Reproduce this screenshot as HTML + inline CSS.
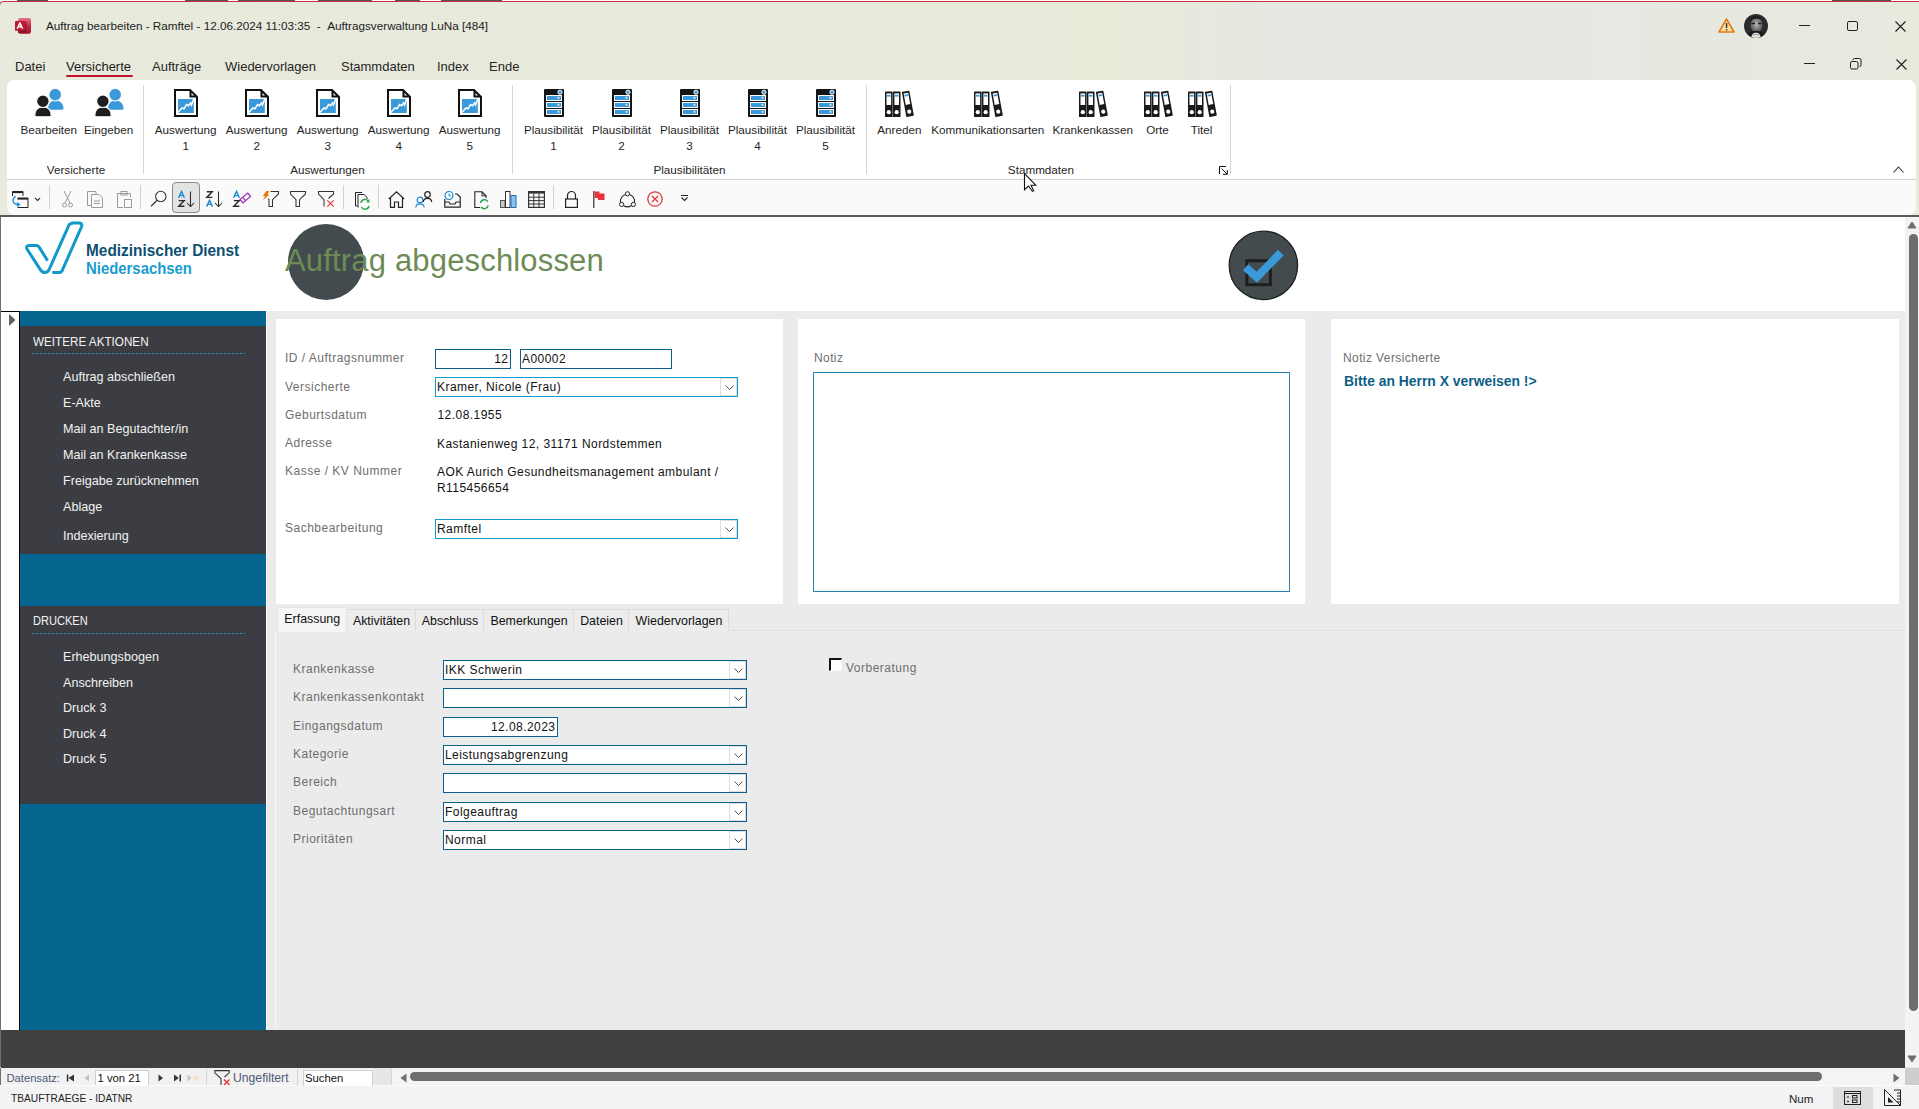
<!DOCTYPE html>
<html><head><meta charset="utf-8">
<style>
*{margin:0;padding:0;box-sizing:border-box}
html,body{width:1919px;height:1109px;overflow:hidden}
body{position:relative;background:#fbfbfb;font-family:"Liberation Sans",sans-serif;color:#000}
.a{position:absolute}
.t{position:absolute;white-space:nowrap;line-height:1}
svg{position:absolute;overflow:visible}
.mn{font-size:13px;color:#262626}
.rl{font-size:12px;color:#1f1f1f;text-align:center;line-height:16px}
.gl{font-size:12px;color:#262626;text-align:center}
.sep{position:absolute;width:1px;background:#d6d6d6}
.qs{position:absolute;width:1px;background:#d2d2d2;top:185px;height:24px}
.lbl{font-size:12px;color:#6e6e6e;letter-spacing:0.55px}
.val{font-size:12px;color:#111;letter-spacing:0.45px}
.box{position:absolute;border:1px solid #0c5f89;background:#fff}
.cmb{position:absolute;border:1px solid #0c5f89;background:#fff}
.cmb.f{border-color:#0f9ad0}
.dd{position:absolute;right:1px;top:1px;width:17px;bottom:1px;border:1px solid #e2e2e2;background:#fff}
.dd:after{content:"";position:absolute;left:4px;top:3px;width:5px;height:5px;border-right:1px solid #555;border-bottom:1px solid #555;transform:rotate(45deg)}
.sb{font-size:12.6px;color:#f2f2f2}
.sh{font-size:11.7px;color:#f4f4f4}
.dot{position:absolute;height:0;border-top:1px dashed #2f8fc0}
.tab{position:absolute;top:609px;height:22px;border:1px solid #dcdcdc;border-bottom:none;background:#ececec;font-size:12.4px;color:#111}
</style></head><body>

<!-- background window strip -->
<div class="a" style="left:0;top:0;width:1919px;height:8px;background:#fbfbfb"></div>
<div class="a" style="left:-1px;top:1px;width:1921px;height:1108px;background:linear-gradient(to right,#e7eadc 0%,#e8eadb 40%,#e9eada 58%,#e6e8e1 66%,#e6e8e2 82%,#e7eadd 100%);border-top:1px solid #c8303e;border-left:1px solid #c8303e;border-top-left-radius:5px"></div>

<div class="a" style="left:17px;top:0;width:31px;height:1px;background:#555"></div><div class="a" style="left:185px;top:0;width:43px;height:1px;background:#555"></div><div class="a" style="left:238px;top:0;width:57px;height:1px;background:#555"></div><div class="a" style="left:318px;top:0;width:54px;height:1px;background:#555"></div><div class="a" style="left:395px;top:0;width:25px;height:1px;background:#555"></div><div class="a" style="left:441px;top:0;width:61px;height:1px;background:#555"></div><div class="a" style="left:1832px;top:0;width:59px;height:1px;background:#555"></div>
<!-- title bar -->
<svg style="left:14px;top:17px" width="18" height="18" viewBox="0 0 18 18"><defs><linearGradient id="acg" x1="0" y1="0" x2="0" y2="1"><stop offset="0" stop-color="#e3788a"/><stop offset="0.5" stop-color="#c7283e"/><stop offset="1" stop-color="#a3132a"/></linearGradient></defs>
<rect x="4" y="1" width="13" height="15.8" rx="2.2" fill="url(#acg)"/>
<rect x="4" y="5" width="8.5" height="10.6" fill="#6e0b18" opacity="0.55"/>
<rect x="1" y="4" width="10.3" height="9.8" rx="0.8" fill="#bb1a30"/>
<path d="M3.2,11.8 L5.9,5.9 L8.6,11.8 M4.3,9.8 L7.5,9.8" fill="none" stroke="#fff" stroke-width="1.5" stroke-linejoin="round"/>
</svg>
<div class="t" style="left:46px;top:20px;font-size:11.72px;color:#1d1d1d">Auftrag bearbeiten - Ramftel - 12.06.2024 11:03:35 &nbsp;- &nbsp;Auftragsverwaltung LuNa [484]</div>

<svg style="left:1718px;top:18px" width="17" height="15" viewBox="0 0 17 15"><path d="M8.5 1 L16 14 L1 14 Z" fill="#fbe3a8" stroke="#e8780f" stroke-width="1.6" stroke-linejoin="round"/><rect x="7.8" y="5" width="1.5" height="5" fill="#333"/><rect x="7.8" y="11" width="1.5" height="1.5" fill="#333"/></svg>
<svg style="left:1744px;top:14px" width="24" height="24" viewBox="0 0 24 24"><defs><clipPath id="av"><circle cx="12" cy="12" r="12"/></clipPath><radialGradient id="fg" cx="0.5" cy="0.45" r="0.5"><stop offset="0" stop-color="#b8b8b8"/><stop offset="1" stop-color="#5a5a5a"/></radialGradient></defs>
<g clip-path="url(#av)"><rect width="24" height="24" fill="#2b2b2b"/>
<ellipse cx="12.5" cy="11" rx="6" ry="7.5" fill="url(#fg)"/>
<path d="M6,7 Q7,1.5 12.5,2 Q18,2 19,7 Q17,4.5 12.5,4.8 Q8,4.5 6,7Z" fill="#1e1e1e"/>
<path d="M7.5,9.5 L11,9.5 M14,9.5 L17.5,9.5" stroke="#222" stroke-width="1.3"/>
<path d="M3,24 Q4,17 8,17.5 Q12,16 16,17.5 Q20,17 21,24Z" fill="#1a1a1a"/>
<path d="M7,24 Q8,18.5 12,18.8 Q16,18.5 17,24Z" fill="#e0e0e0"/>
<path d="M9,21 Q12,19.5 15,21" stroke="#888" stroke-width="0.8" fill="none"/>
</g></svg>

<div class="a" style="left:1799px;top:25px;width:11px;height:1px;background:#222"></div>
<div class="a" style="left:1847px;top:21px;width:11px;height:10px;border:1px solid #222;border-radius:2px"></div>
<svg style="left:1895px;top:21px" width="11" height="11" viewBox="0 0 11 11"><path d="M0.5 0.5 L10.5 10.5 M10.5 0.5 L0.5 10.5" stroke="#222" stroke-width="1.15"/></svg>

<!-- menu -->
<div class="t mn" style="left:15px;top:59.5px">Datei</div>
<div class="t mn" style="left:66px;top:59.5px;color:#1a1a1a">Versicherte</div>
<div class="a" style="left:66px;top:75px;width:67px;height:2px;background:#c0152c;border-radius:1px"></div>
<div class="t mn" style="left:152px;top:59.5px">Aufträge</div>
<div class="t mn" style="left:225px;top:59.5px">Wiedervorlagen</div>
<div class="t mn" style="left:341px;top:59.5px">Stammdaten</div>
<div class="t mn" style="left:437px;top:59.5px">Index</div>
<div class="t mn" style="left:489px;top:59.5px">Ende</div>

<div class="a" style="left:1804px;top:63px;width:11px;height:1px;background:#222"></div>
<svg style="left:1850px;top:58px" width="12" height="12" viewBox="0 0 12 12"><rect x="0.5" y="3.5" width="7.5" height="7.5" rx="1.5" fill="none" stroke="#222"/><path d="M3 2 Q3 0.5 4.5 0.5 L9.5 0.5 Q11 0.5 11 2 L11 7 Q11 8.5 9.5 8.5" fill="none" stroke="#222"/></svg>
<svg style="left:1896px;top:59px" width="11" height="11" viewBox="0 0 11 11"><path d="M0.5 0.5 L10.5 10.5 M10.5 0.5 L0.5 10.5" stroke="#222" stroke-width="1.15"/></svg>

<!-- ribbon -->
<div class="a" style="left:7px;top:80px;width:1909px;height:135px;background:#fafafa;border-radius:8px"></div>
<div class="a" style="left:7px;top:80px;width:1909px;height:99px;background:#fff;border-radius:8px 8px 0 0"></div>
<div class="a" style="left:7px;top:179px;width:1909px;height:1px;background:#d0d0d0"></div>


<svg style="left:35px;top:88px" width="29" height="29" viewBox="0 0 29 29">
<path d="M13,21.5 C13,15.5 16,12.5 20.5,12.5 C25,12.5 28.5,15.5 28.5,20.5 Q28.5,21.8 27,21.8 L14,21.8 Q13,21.8 13,21.5Z" fill="#3a9ad9"/>
<circle cx="20.2" cy="6.6" r="6.4" fill="#3a9ad9" stroke="#fff" stroke-width="1.2"/>
<path d="M-0.2,27.5 C-0.2,21.5 3,19 8,19 C13,19 16.2,21.5 16.2,27.5 Q16.2,28.8 15,28.8 L1,28.8 Q-0.2,28.8 -0.2,27.5Z" fill="#1e1e1e" stroke="#fff" stroke-width="1.2"/>
<circle cx="7.9" cy="13.2" r="6.3" fill="#1e1e1e" stroke="#fff" stroke-width="1.2"/>
</svg>
<div class="t" style="left:-101.2px;width:300px;text-align:center;top:124.1px;font-size:11.7px;color:#1f1f1f;">Bearbeiten</div>
<svg style="left:95px;top:88px" width="29" height="29" viewBox="0 0 29 29">
<path d="M13,21.5 C13,15.5 16,12.5 20.5,12.5 C25,12.5 28.5,15.5 28.5,20.5 Q28.5,21.8 27,21.8 L14,21.8 Q13,21.8 13,21.5Z" fill="#3a9ad9"/>
<circle cx="20.2" cy="6.6" r="6.4" fill="#3a9ad9" stroke="#fff" stroke-width="1.2"/>
<path d="M-0.2,27.5 C-0.2,21.5 3,19 8,19 C13,19 16.2,21.5 16.2,27.5 Q16.2,28.8 15,28.8 L1,28.8 Q-0.2,28.8 -0.2,27.5Z" fill="#1e1e1e" stroke="#fff" stroke-width="1.2"/>
<circle cx="7.9" cy="13.2" r="6.3" fill="#1e1e1e" stroke="#fff" stroke-width="1.2"/>
</svg>
<div class="t" style="left:-41.4px;width:300px;text-align:center;top:124.1px;font-size:11.7px;color:#1f1f1f;">Eingeben</div>
<svg style="left:174px;top:89px" width="24" height="28" viewBox="0 0 24 28">
<path d="M1,1 L16,1 L23,8 L23,27 L1,27 Z" fill="#fff" stroke="#111" stroke-width="2" stroke-linejoin="miter"/>
<path d="M15.5,1 L15.5,8.5 L23,8.5 Z" fill="#111"/><path d="M17.5,4 L20,6.5 L17.5,6.5Z" fill="#fff"/>
<rect x="4" y="10" width="15.8" height="14" fill="#3a9ad9"/>
<path d="M3.8,23.5 L8,19 L10,19.8 L12.5,15.5 L14.5,16.8 L16.5,14 L17.5,16 L19.8,9.8" fill="none" stroke="#fff" stroke-width="1.5"/>
</svg>
<div class="t" style="left:35.7px;width:300px;text-align:center;top:124.1px;font-size:11.7px;color:#1f1f1f;">Auswertung</div>
<div class="t" style="left:35.7px;width:300px;text-align:center;top:140.1px;font-size:11.7px;color:#1f1f1f;">1</div>
<svg style="left:245px;top:89px" width="24" height="28" viewBox="0 0 24 28">
<path d="M1,1 L16,1 L23,8 L23,27 L1,27 Z" fill="#fff" stroke="#111" stroke-width="2" stroke-linejoin="miter"/>
<path d="M15.5,1 L15.5,8.5 L23,8.5 Z" fill="#111"/><path d="M17.5,4 L20,6.5 L17.5,6.5Z" fill="#fff"/>
<rect x="4" y="10" width="15.8" height="14" fill="#3a9ad9"/>
<path d="M3.8,23.5 L8,19 L10,19.8 L12.5,15.5 L14.5,16.8 L16.5,14 L17.5,16 L19.8,9.8" fill="none" stroke="#fff" stroke-width="1.5"/>
</svg>
<div class="t" style="left:106.7px;width:300px;text-align:center;top:124.1px;font-size:11.7px;color:#1f1f1f;">Auswertung</div>
<div class="t" style="left:106.7px;width:300px;text-align:center;top:140.1px;font-size:11.7px;color:#1f1f1f;">2</div>
<svg style="left:316px;top:89px" width="24" height="28" viewBox="0 0 24 28">
<path d="M1,1 L16,1 L23,8 L23,27 L1,27 Z" fill="#fff" stroke="#111" stroke-width="2" stroke-linejoin="miter"/>
<path d="M15.5,1 L15.5,8.5 L23,8.5 Z" fill="#111"/><path d="M17.5,4 L20,6.5 L17.5,6.5Z" fill="#fff"/>
<rect x="4" y="10" width="15.8" height="14" fill="#3a9ad9"/>
<path d="M3.8,23.5 L8,19 L10,19.8 L12.5,15.5 L14.5,16.8 L16.5,14 L17.5,16 L19.8,9.8" fill="none" stroke="#fff" stroke-width="1.5"/>
</svg>
<div class="t" style="left:177.7px;width:300px;text-align:center;top:124.1px;font-size:11.7px;color:#1f1f1f;">Auswertung</div>
<div class="t" style="left:177.7px;width:300px;text-align:center;top:140.1px;font-size:11.7px;color:#1f1f1f;">3</div>
<svg style="left:387px;top:89px" width="24" height="28" viewBox="0 0 24 28">
<path d="M1,1 L16,1 L23,8 L23,27 L1,27 Z" fill="#fff" stroke="#111" stroke-width="2" stroke-linejoin="miter"/>
<path d="M15.5,1 L15.5,8.5 L23,8.5 Z" fill="#111"/><path d="M17.5,4 L20,6.5 L17.5,6.5Z" fill="#fff"/>
<rect x="4" y="10" width="15.8" height="14" fill="#3a9ad9"/>
<path d="M3.8,23.5 L8,19 L10,19.8 L12.5,15.5 L14.5,16.8 L16.5,14 L17.5,16 L19.8,9.8" fill="none" stroke="#fff" stroke-width="1.5"/>
</svg>
<div class="t" style="left:248.7px;width:300px;text-align:center;top:124.1px;font-size:11.7px;color:#1f1f1f;">Auswertung</div>
<div class="t" style="left:248.7px;width:300px;text-align:center;top:140.1px;font-size:11.7px;color:#1f1f1f;">4</div>
<svg style="left:458px;top:89px" width="24" height="28" viewBox="0 0 24 28">
<path d="M1,1 L16,1 L23,8 L23,27 L1,27 Z" fill="#fff" stroke="#111" stroke-width="2" stroke-linejoin="miter"/>
<path d="M15.5,1 L15.5,8.5 L23,8.5 Z" fill="#111"/><path d="M17.5,4 L20,6.5 L17.5,6.5Z" fill="#fff"/>
<rect x="4" y="10" width="15.8" height="14" fill="#3a9ad9"/>
<path d="M3.8,23.5 L8,19 L10,19.8 L12.5,15.5 L14.5,16.8 L16.5,14 L17.5,16 L19.8,9.8" fill="none" stroke="#fff" stroke-width="1.5"/>
</svg>
<div class="t" style="left:319.7px;width:300px;text-align:center;top:124.1px;font-size:11.7px;color:#1f1f1f;">Auswertung</div>
<div class="t" style="left:319.7px;width:300px;text-align:center;top:140.1px;font-size:11.7px;color:#1f1f1f;">5</div>
<svg style="left:544px;top:89px" width="20" height="28" viewBox="0 0 20 28">
<rect x="0" y="0" width="20" height="28" rx="1" fill="#151515"/>
<circle cx="16" cy="3.2" r="2.1" fill="#3a9ad9" stroke="#fff" stroke-width="1"/><rect x="2" y="6" width="16" height="6" fill="#fff"/><rect x="3" y="7" width="14" height="4" fill="#3a9ad9"/><rect x="13.5" y="7.8" width="2" height="2" fill="#ddd"/><rect x="2" y="13" width="16" height="6" fill="#fff"/><rect x="3" y="14" width="14" height="4" fill="#3a9ad9"/><rect x="13.5" y="14.8" width="2" height="2" fill="#ddd"/><rect x="2" y="20" width="16" height="6" fill="#fff"/><rect x="3" y="21" width="14" height="4" fill="#3a9ad9"/><rect x="13.5" y="21.8" width="2" height="2" fill="#ddd"/>
</svg>
<div class="t" style="left:403.5px;width:300px;text-align:center;top:124.1px;font-size:11.7px;color:#1f1f1f;">Plausibilität</div>
<div class="t" style="left:403.5px;width:300px;text-align:center;top:140.1px;font-size:11.7px;color:#1f1f1f;">1</div>
<svg style="left:612px;top:89px" width="20" height="28" viewBox="0 0 20 28">
<rect x="0" y="0" width="20" height="28" rx="1" fill="#151515"/>
<circle cx="16" cy="3.2" r="2.1" fill="#3a9ad9" stroke="#fff" stroke-width="1"/><rect x="2" y="6" width="16" height="6" fill="#fff"/><rect x="3" y="7" width="14" height="4" fill="#3a9ad9"/><rect x="13.5" y="7.8" width="2" height="2" fill="#ddd"/><rect x="2" y="13" width="16" height="6" fill="#fff"/><rect x="3" y="14" width="14" height="4" fill="#3a9ad9"/><rect x="13.5" y="14.8" width="2" height="2" fill="#ddd"/><rect x="2" y="20" width="16" height="6" fill="#fff"/><rect x="3" y="21" width="14" height="4" fill="#3a9ad9"/><rect x="13.5" y="21.8" width="2" height="2" fill="#ddd"/>
</svg>
<div class="t" style="left:471.5px;width:300px;text-align:center;top:124.1px;font-size:11.7px;color:#1f1f1f;">Plausibilität</div>
<div class="t" style="left:471.5px;width:300px;text-align:center;top:140.1px;font-size:11.7px;color:#1f1f1f;">2</div>
<svg style="left:680px;top:89px" width="20" height="28" viewBox="0 0 20 28">
<rect x="0" y="0" width="20" height="28" rx="1" fill="#151515"/>
<circle cx="16" cy="3.2" r="2.1" fill="#3a9ad9" stroke="#fff" stroke-width="1"/><rect x="2" y="6" width="16" height="6" fill="#fff"/><rect x="3" y="7" width="14" height="4" fill="#3a9ad9"/><rect x="13.5" y="7.8" width="2" height="2" fill="#ddd"/><rect x="2" y="13" width="16" height="6" fill="#fff"/><rect x="3" y="14" width="14" height="4" fill="#3a9ad9"/><rect x="13.5" y="14.8" width="2" height="2" fill="#ddd"/><rect x="2" y="20" width="16" height="6" fill="#fff"/><rect x="3" y="21" width="14" height="4" fill="#3a9ad9"/><rect x="13.5" y="21.8" width="2" height="2" fill="#ddd"/>
</svg>
<div class="t" style="left:539.5px;width:300px;text-align:center;top:124.1px;font-size:11.7px;color:#1f1f1f;">Plausibilität</div>
<div class="t" style="left:539.5px;width:300px;text-align:center;top:140.1px;font-size:11.7px;color:#1f1f1f;">3</div>
<svg style="left:748px;top:89px" width="20" height="28" viewBox="0 0 20 28">
<rect x="0" y="0" width="20" height="28" rx="1" fill="#151515"/>
<circle cx="16" cy="3.2" r="2.1" fill="#3a9ad9" stroke="#fff" stroke-width="1"/><rect x="2" y="6" width="16" height="6" fill="#fff"/><rect x="3" y="7" width="14" height="4" fill="#3a9ad9"/><rect x="13.5" y="7.8" width="2" height="2" fill="#ddd"/><rect x="2" y="13" width="16" height="6" fill="#fff"/><rect x="3" y="14" width="14" height="4" fill="#3a9ad9"/><rect x="13.5" y="14.8" width="2" height="2" fill="#ddd"/><rect x="2" y="20" width="16" height="6" fill="#fff"/><rect x="3" y="21" width="14" height="4" fill="#3a9ad9"/><rect x="13.5" y="21.8" width="2" height="2" fill="#ddd"/>
</svg>
<div class="t" style="left:607.5px;width:300px;text-align:center;top:124.1px;font-size:11.7px;color:#1f1f1f;">Plausibilität</div>
<div class="t" style="left:607.5px;width:300px;text-align:center;top:140.1px;font-size:11.7px;color:#1f1f1f;">4</div>
<svg style="left:816px;top:89px" width="20" height="28" viewBox="0 0 20 28">
<rect x="0" y="0" width="20" height="28" rx="1" fill="#151515"/>
<circle cx="16" cy="3.2" r="2.1" fill="#3a9ad9" stroke="#fff" stroke-width="1"/><rect x="2" y="6" width="16" height="6" fill="#fff"/><rect x="3" y="7" width="14" height="4" fill="#3a9ad9"/><rect x="13.5" y="7.8" width="2" height="2" fill="#ddd"/><rect x="2" y="13" width="16" height="6" fill="#fff"/><rect x="3" y="14" width="14" height="4" fill="#3a9ad9"/><rect x="13.5" y="14.8" width="2" height="2" fill="#ddd"/><rect x="2" y="20" width="16" height="6" fill="#fff"/><rect x="3" y="21" width="14" height="4" fill="#3a9ad9"/><rect x="13.5" y="21.8" width="2" height="2" fill="#ddd"/>
</svg>
<div class="t" style="left:675.5px;width:300px;text-align:center;top:124.1px;font-size:11.7px;color:#1f1f1f;">Plausibilität</div>
<div class="t" style="left:675.5px;width:300px;text-align:center;top:140.1px;font-size:11.7px;color:#1f1f1f;">5</div>
<svg style="left:885px;top:91px" width="30" height="27" viewBox="0 0 30 27">
<rect x="0" y="0.5" width="7.6" height="25.5" rx="0.6" fill="#1a1a1a"/><rect x="1.5" y="2.4" width="4.6" height="11.6" fill="#fff"/><rect x="2" y="3.8" width="3.6" height="1.8" fill="#3a9ad9"/><circle cx="3.8" cy="21.2" r="2.1" fill="#fff"/><rect x="7.9" y="0.5" width="7.6" height="25.5" rx="0.6" fill="#1a1a1a"/><rect x="9.4" y="2.4" width="4.6" height="11.6" fill="#fff"/><rect x="9.9" y="3.8" width="3.6" height="1.8" fill="#3a9ad9"/><circle cx="11.7" cy="21.2" r="2.1" fill="#fff"/><g transform="translate(21.4,26) rotate(-10.4) translate(0,-26)"><rect x="0" y="0.5" width="7.6" height="25.5" rx="0.6" fill="#1a1a1a"/><rect x="1.5" y="2.4" width="4.6" height="11.6" fill="#fff"/><rect x="2" y="3.8" width="3.6" height="1.8" fill="#3a9ad9"/><circle cx="3.8" cy="21.2" r="2.1" fill="#fff"/></g>
</svg>
<div class="t" style="left:749.4px;width:300px;text-align:center;top:124.1px;font-size:11.7px;color:#1f1f1f;">Anreden</div>
<svg style="left:974px;top:91px" width="30" height="27" viewBox="0 0 30 27">
<rect x="0" y="0.5" width="7.6" height="25.5" rx="0.6" fill="#1a1a1a"/><rect x="1.5" y="2.4" width="4.6" height="11.6" fill="#fff"/><rect x="2" y="3.8" width="3.6" height="1.8" fill="#3a9ad9"/><circle cx="3.8" cy="21.2" r="2.1" fill="#fff"/><rect x="7.9" y="0.5" width="7.6" height="25.5" rx="0.6" fill="#1a1a1a"/><rect x="9.4" y="2.4" width="4.6" height="11.6" fill="#fff"/><rect x="9.9" y="3.8" width="3.6" height="1.8" fill="#3a9ad9"/><circle cx="11.7" cy="21.2" r="2.1" fill="#fff"/><g transform="translate(21.4,26) rotate(-10.4) translate(0,-26)"><rect x="0" y="0.5" width="7.6" height="25.5" rx="0.6" fill="#1a1a1a"/><rect x="1.5" y="2.4" width="4.6" height="11.6" fill="#fff"/><rect x="2" y="3.8" width="3.6" height="1.8" fill="#3a9ad9"/><circle cx="3.8" cy="21.2" r="2.1" fill="#fff"/></g>
</svg>
<div class="t" style="left:837.7px;width:300px;text-align:center;top:124.1px;font-size:11.7px;color:#1f1f1f;">Kommunikationsarten</div>
<svg style="left:1079px;top:91px" width="30" height="27" viewBox="0 0 30 27">
<rect x="0" y="0.5" width="7.6" height="25.5" rx="0.6" fill="#1a1a1a"/><rect x="1.5" y="2.4" width="4.6" height="11.6" fill="#fff"/><rect x="2" y="3.8" width="3.6" height="1.8" fill="#3a9ad9"/><circle cx="3.8" cy="21.2" r="2.1" fill="#fff"/><rect x="7.9" y="0.5" width="7.6" height="25.5" rx="0.6" fill="#1a1a1a"/><rect x="9.4" y="2.4" width="4.6" height="11.6" fill="#fff"/><rect x="9.9" y="3.8" width="3.6" height="1.8" fill="#3a9ad9"/><circle cx="11.7" cy="21.2" r="2.1" fill="#fff"/><g transform="translate(21.4,26) rotate(-10.4) translate(0,-26)"><rect x="0" y="0.5" width="7.6" height="25.5" rx="0.6" fill="#1a1a1a"/><rect x="1.5" y="2.4" width="4.6" height="11.6" fill="#fff"/><rect x="2" y="3.8" width="3.6" height="1.8" fill="#3a9ad9"/><circle cx="3.8" cy="21.2" r="2.1" fill="#fff"/></g>
</svg>
<div class="t" style="left:942.7px;width:300px;text-align:center;top:124.1px;font-size:11.7px;color:#1f1f1f;">Krankenkassen</div>
<svg style="left:1144px;top:91px" width="30" height="27" viewBox="0 0 30 27">
<rect x="0" y="0.5" width="7.6" height="25.5" rx="0.6" fill="#1a1a1a"/><rect x="1.5" y="2.4" width="4.6" height="11.6" fill="#fff"/><rect x="2" y="3.8" width="3.6" height="1.8" fill="#3a9ad9"/><circle cx="3.8" cy="21.2" r="2.1" fill="#fff"/><rect x="7.9" y="0.5" width="7.6" height="25.5" rx="0.6" fill="#1a1a1a"/><rect x="9.4" y="2.4" width="4.6" height="11.6" fill="#fff"/><rect x="9.9" y="3.8" width="3.6" height="1.8" fill="#3a9ad9"/><circle cx="11.7" cy="21.2" r="2.1" fill="#fff"/><g transform="translate(21.4,26) rotate(-10.4) translate(0,-26)"><rect x="0" y="0.5" width="7.6" height="25.5" rx="0.6" fill="#1a1a1a"/><rect x="1.5" y="2.4" width="4.6" height="11.6" fill="#fff"/><rect x="2" y="3.8" width="3.6" height="1.8" fill="#3a9ad9"/><circle cx="3.8" cy="21.2" r="2.1" fill="#fff"/></g>
</svg>
<div class="t" style="left:1007.5px;width:300px;text-align:center;top:124.1px;font-size:11.7px;color:#1f1f1f;">Orte</div>
<svg style="left:1188px;top:91px" width="30" height="27" viewBox="0 0 30 27">
<rect x="0" y="0.5" width="7.6" height="25.5" rx="0.6" fill="#1a1a1a"/><rect x="1.5" y="2.4" width="4.6" height="11.6" fill="#fff"/><rect x="2" y="3.8" width="3.6" height="1.8" fill="#3a9ad9"/><circle cx="3.8" cy="21.2" r="2.1" fill="#fff"/><rect x="7.9" y="0.5" width="7.6" height="25.5" rx="0.6" fill="#1a1a1a"/><rect x="9.4" y="2.4" width="4.6" height="11.6" fill="#fff"/><rect x="9.9" y="3.8" width="3.6" height="1.8" fill="#3a9ad9"/><circle cx="11.7" cy="21.2" r="2.1" fill="#fff"/><g transform="translate(21.4,26) rotate(-10.4) translate(0,-26)"><rect x="0" y="0.5" width="7.6" height="25.5" rx="0.6" fill="#1a1a1a"/><rect x="1.5" y="2.4" width="4.6" height="11.6" fill="#fff"/><rect x="2" y="3.8" width="3.6" height="1.8" fill="#3a9ad9"/><circle cx="3.8" cy="21.2" r="2.1" fill="#fff"/></g>
</svg>
<div class="t" style="left:1051.6px;width:300px;text-align:center;top:124.1px;font-size:11.7px;color:#1f1f1f;">Titel</div>
<div class="t" style="left:-74.0px;width:300px;text-align:center;top:164.1px;font-size:11.7px;color:#262626;">Versicherte</div>
<div class="t" style="left:177.5px;width:300px;text-align:center;top:164.1px;font-size:11.7px;color:#262626;">Auswertungen</div>
<div class="t" style="left:539.5px;width:300px;text-align:center;top:164.1px;font-size:11.7px;color:#262626;">Plausibilitäten</div>
<div class="t" style="left:891.0px;width:300px;text-align:center;top:164.1px;font-size:11.7px;color:#262626;">Stammdaten</div>
<div class="sep" style="left:143px;top:85px;height:89px"></div>
<div class="sep" style="left:512px;top:85px;height:89px"></div>
<div class="sep" style="left:866px;top:85px;height:89px"></div>
<div class="sep" style="left:1230px;top:85px;height:89px"></div>
<svg style="left:1219px;top:166px" width="9" height="9" viewBox="0 0 9 9"><path d="M0.5,8 L0.5,0.5 L7,0.5 M2.5,2.5 L8,8 M4,8.3 L8.3,8.3 L8.3,4" fill="none" stroke="#111" stroke-width="1"/></svg>
<svg style="left:1893px;top:166px" width="11" height="7" viewBox="0 0 11 7"><path d="M0.5,6.5 L5.5,1 L10.5,6.5" fill="none" stroke="#333" stroke-width="1.1"/></svg>
<div class="a" style="left:172px;top:182px;width:28px;height:31px;background:#e3e3e3;border:1px solid #8a8a8a;border-radius:4px"></div>
<div class="qs" style="left:49px"></div>
<div class="qs" style="left:140px"></div>
<div class="qs" style="left:343px"></div>
<div class="qs" style="left:378px"></div>
<div class="qs" style="left:553px"></div>
<svg style="left:12px;top:191px" width="28" height="17" viewBox="0 0 28 17"><path d="M0.5,5 L0.5,0.5 L11,0.5 L11,5" fill="none" stroke="#222"/><rect x="0.5" y="0.5" width="10.5" height="1.6" fill="#222"/><path d="M5.5,7 L16,7 L16,16.5 L5.5,16.5" fill="none" stroke="#222"/><rect x="5.5" y="7" width="10.5" height="1.6" fill="#222"/><path d="M3.5,5 Q-0.5,9 2,12 Q4,14 7,13.5" fill="none" stroke="#1a8ad4" stroke-width="1.3"/><path d="M5,11.5 L7.5,13.5 L5,15.5" fill="none" stroke="#1a8ad4" stroke-width="1.3"/><path d="M23,7 L25.5,9.5 L28,7" fill="none" stroke="#333" stroke-width="1.1"/></svg>
<svg style="left:62px;top:191px" width="11" height="17" viewBox="0 0 11 17"><path d="M2,0 L8,12 M9,0 L3,12" stroke="#9a9a9a" stroke-width="1"/><circle cx="2.5" cy="14" r="2" fill="none" stroke="#9a9a9a"/><circle cx="8.5" cy="14" r="2" fill="none" stroke="#9a9a9a"/></svg>
<svg style="left:87px;top:191px" width="17" height="17" viewBox="0 0 17 17"><path d="M4,14.5 L0.5,14.5 L0.5,0.5 L9,0.5 L9,3" fill="none" stroke="#9a9a9a"/><path d="M4.5,3.5 L12,3.5 L15.5,7 L15.5,16.5 L4.5,16.5 Z" fill="none" stroke="#9a9a9a"/><path d="M7,10 L13,10 M7,12.5 L13,12.5" stroke="#9a9a9a"/></svg>
<svg style="left:117px;top:191px" width="15" height="17" viewBox="0 0 15 17"><path d="M0.5,2.5 L13.5,2.5 L13.5,6 M0.5,2.5 L0.5,16.5 L6,16.5" fill="none" stroke="#9a9a9a"/><rect x="4" y="0.5" width="6" height="3.5" fill="none" stroke="#9a9a9a"/><rect x="7.5" y="8.5" width="7" height="8" fill="none" stroke="#9a9a9a"/></svg>
<svg style="left:150px;top:190px" width="18" height="18" viewBox="0 0 18 18"><circle cx="10.8" cy="6.5" r="5.2" fill="none" stroke="#333" stroke-width="1.1"/><path d="M7.2,10.2 L1,16.3" stroke="#333" stroke-width="1.2"/></svg>
<svg style="left:178px;top:191px" width="17" height="17" viewBox="0 0 17 17"><path d="M0.6,6.8 L3.5,0.4 L6.4,6.8 M1.6,4.6 L5.4,4.6" fill="none" stroke="#1a8ad4" stroke-width="1.4" stroke-linejoin="miter"/><g transform="translate(0,8.8)"><path d="M0.8,0.8 L6.2,0.8 L0.8,6.4 L6.4,6.4" fill="none" stroke="#2a2a2a" stroke-width="1.4"/></g><path d="M12.5,0.5 L12.5,15.5 M9,12 L12.5,15.5 L16,12" fill="none" stroke="#2a2a2a" stroke-width="1.05"/></svg>
<svg style="left:206px;top:191px" width="17" height="17" viewBox="0 0 17 17"><path d="M0.8,0.8 L6.2,0.8 L0.8,6.4 L6.4,6.4" fill="none" stroke="#2a2a2a" stroke-width="1.4" stroke-linejoin="miter"/><g transform="translate(0,8.8)"><path d="M0.6,6.8 L3.5,0.4 L6.4,6.8 M1.6,4.6 L5.4,4.6" fill="none" stroke="#1a8ad4" stroke-width="1.4"/></g><path d="M12.5,0.5 L12.5,15.5 M9,12 L12.5,15.5 L16,12" fill="none" stroke="#2a2a2a" stroke-width="1.05"/></svg>
<svg style="left:233px;top:191px" width="18" height="17" viewBox="0 0 18 17"><path d="M0.6,6.8 L3.5,0.4 L6.4,6.8 M1.6,4.6 L5.4,4.6" fill="none" stroke="#1a8ad4" stroke-width="1.4" stroke-linejoin="miter"/><g transform="translate(0,8.8)"><path d="M0.8,0.8 L6.2,0.8 L0.8,6.4 L6.4,6.4" fill="none" stroke="#2a2a2a" stroke-width="1.4"/></g><g transform="translate(12.3,7) rotate(-40)"><rect x="-5" y="-2.2" width="10" height="4.4" fill="none" stroke="#9b30b8" stroke-width="1.3"/><path d="M-1.5,-2.2 L-1.5,2.2" stroke="#9b30b8" stroke-width="1.2"/></g></svg>
<svg style="left:262px;top:191px" width="17" height="17" viewBox="0 0 17 17"><g transform="translate(1,0)"><path d="M0.5,0.5 L15.5,0.5 L15.5,3 L9.5,8.7 L9.5,15.5 L6,15.5 L6,8.7 L0.5,3 Z" fill="none" stroke="#333" stroke-width="1.05"/></g><path d="M0,0 L8.5,0 L8.5,4 L6,8 L0,8Z" fill="#fafafa"/><path d="M4.3,0 L7.3,0 L5.5,3.6 L7.6,3.6 L1,9.3 L3,5 L0.8,5 Z" fill="#e8780f"/></svg>
<svg style="left:290px;top:191px" width="17" height="17" viewBox="0 0 17 17"><path d="M0.5,0.5 L15.5,0.5 L15.5,3 L9.5,8.7 L9.5,15.5 L6,15.5 L6,8.7 L0.5,3 Z" fill="none" stroke="#333" stroke-width="1.05"/></svg>
<svg style="left:318px;top:191px" width="17" height="17" viewBox="0 0 17 17"><path d="M6,15.5 L6,8.7 L0.5,3 L0.5,0.5 L15.5,0.5 L15.5,3 L10.5,7.5" fill="none" stroke="#333" stroke-width="1.05"/><path d="M9.3,9.3 L15.7,15.7 M15.7,9.3 L9.3,15.7" stroke="#e83a3a" stroke-width="1.2"/></svg>
<svg style="left:355px;top:191px" width="15" height="17" viewBox="0 0 15 17"><path d="M2.5,15 L0.5,15 L0.5,1.5 L7,1.5" fill="none" stroke="#222"/><path d="M3,16.5 L3,3.5 L9,3.5 L12,6.5 L12,8" fill="none" stroke="#222"/><path d="M6,12 A4,4 0 0 1 13.5,10.5 M14,15 A4,4 0 0 1 6.5,16" fill="none" stroke="#22a34a" stroke-width="1.4"/><path d="M13.8,8.5 L13.8,11 L11.5,11" fill="none" stroke="#22a34a" stroke-width="1.2"/></svg>
<svg style="left:388px;top:191px" width="17" height="17" viewBox="0 0 17 17"><path d="M0.8,8 L8.5,0.8 L16.2,8 M2.5,6.5 L2.5,16.3 L6.5,16.3 L6.5,11 L10.5,11 L10.5,16.3 L14.5,16.3 L14.5,6.5" fill="none" stroke="#222" stroke-width="1.2"/></svg>
<svg style="left:415px;top:191px" width="18" height="17" viewBox="0 0 18 17"><circle cx="5" cy="9" r="2.8" fill="none" stroke="#1a8ad4" stroke-width="1.2"/><path d="M0.8,16.5 Q1,12.8 5,12.8 Q9,12.8 9.2,16.5" fill="none" stroke="#1a8ad4" stroke-width="1.2"/><circle cx="12.5" cy="3.5" r="2.8" fill="none" stroke="#222" stroke-width="1.2"/><path d="M8.3,11 Q8.5,7.3 12.5,7.3 Q16.5,7.3 16.7,11" fill="none" stroke="#222" stroke-width="1.2"/></svg>
<svg style="left:444px;top:191px" width="17" height="17" viewBox="0 0 17 17"><path d="M0.8,8 L0.8,16.2 L16.2,16.2 L16.2,6 L13,3 L11,3" fill="none" stroke="#222" stroke-width="1.2"/><path d="M0.8,11 L5,11 L6,13 L11,13 L12,11 L16,11" fill="none" stroke="#222" stroke-width="1.1"/><circle cx="5" cy="4.5" r="4" fill="#fff" stroke="#1a8ad4" stroke-width="1.2"/><path d="M5,2.5 L5,4.8 L6.8,4.8" fill="none" stroke="#1a8ad4"/></svg>
<svg style="left:474px;top:191px" width="15" height="17" viewBox="0 0 15 17"><path d="M6,16.5 L0.8,16.5 L0.8,0.8 L8,0.8 L12,4.8 L12,7" fill="none" stroke="#222" stroke-width="1.1"/><path d="M8,0.8 L8,4.8 L12,4.8" fill="none" stroke="#222"/><path d="M6.5,12 A4,4 0 0 1 13.8,10.5 M14.2,14.5 A4,4 0 0 1 7,16" fill="none" stroke="#22a34a" stroke-width="1.4"/></svg>
<svg style="left:500px;top:191px" width="17" height="17" viewBox="0 0 17 17"><rect x="0.5" y="9.5" width="4.5" height="7" fill="#c8c8c8" stroke="#555"/><rect x="5.5" y="0.5" width="4.5" height="16" fill="#fff" stroke="#333"/><rect x="11" y="4.5" width="5" height="12" fill="#8cc3ea" stroke="#1a6fc0"/></svg>
<svg style="left:528px;top:191px" width="17" height="17" viewBox="0 0 17 17"><rect x="0.6" y="0.6" width="15.8" height="15.8" fill="none" stroke="#333" stroke-width="1.2"/><rect x="0.6" y="0.6" width="15.8" height="2" fill="#333"/><path d="M0.6,6.2 L16.4,6.2 M0.6,9.6 L16.4,9.6 M0.6,13 L16.4,13 M5.8,2.6 L5.8,16.4 M11,2.6 L11,16.4" stroke="#333" stroke-width="1"/></svg>
<svg style="left:565px;top:191px" width="13" height="17" viewBox="0 0 13 17"><path d="M2.5,8 L2.5,4.5 A4,4 0 0 1 10.5,4.5 L10.5,8" fill="none" stroke="#222" stroke-width="1.2"/><rect x="0.6" y="8" width="11.8" height="8.4" fill="none" stroke="#222" stroke-width="1.2"/></svg>
<svg style="left:593px;top:191px" width="12" height="17" viewBox="0 0 12 17"><path d="M0.8,0 L0.8,17" stroke="#222" stroke-width="1.1"/><rect x="1.5" y="0.5" width="5" height="6.5" fill="#e8323c"/><rect x="5" y="2.5" width="6.5" height="6.5" fill="#e8323c"/></svg>
<svg style="left:619px;top:191px" width="17" height="17" viewBox="0 0 17 17"><circle cx="8.5" cy="2.8" r="2.1" fill="none" stroke="#222"/><circle cx="2.6" cy="13.4" r="2.1" fill="none" stroke="#222"/><circle cx="14.4" cy="13.4" r="2.1" fill="none" stroke="#222"/><path d="M6.5,3.5 A7,7 0 0 0 1.5,11.3 M10.5,3.5 A7,7 0 0 1 15.5,11.3 M4.7,14.7 A7,7 0 0 0 12.3,14.7" fill="none" stroke="#222" stroke-width="1.1"/></svg>
<svg style="left:647px;top:191px" width="16" height="16" viewBox="0 0 16 16"><circle cx="8" cy="8" r="7.2" fill="none" stroke="#e03a3a" stroke-width="1.3"/><path d="M5,5 L11,11 M11,5 L5,11" stroke="#e03a3a" stroke-width="1.3"/></svg>
<svg style="left:681px;top:195px" width="7" height="6" viewBox="0 0 7 6"><path d="M0,0.5 L7,0.5" stroke="#222"/><path d="M0.5,2.5 L3.5,5.5 L6.5,2.5" fill="none" stroke="#222" stroke-width="1.1"/></svg>

<div class="a" style="left:0;top:215px;width:1919px;height:2px;background:#5a5a5a"></div>
<div class="a" style="left:0;top:217px;width:1905px;height:813px;background:#fff"></div>
<div class="a" style="left:0;top:217px;width:1px;height:850px;background:#707070"></div>
<svg style="left:20px;top:218px" width="70" height="60" viewBox="20 218 70 60">
<path d="M47.6,260.7 L38.8,246.6 Q38,245.6 36.6,245.6 L29,245.6 Q25.6,245.8 27,249 L40.3,269.6 Q42.2,272.6 45,272.6 Q47.5,272.6 49,269.8 L68.6,225.8 Q70,223.1 73,223.1 L79.4,223.1 Q82.6,223.4 81.6,226.5 L62.7,269.4 Q61.6,272.6 58.6,272.6 L52.3,272.6" fill="none" stroke="#1199cc" stroke-width="3" stroke-linejoin="round"/>
</svg>
<div class="t" style="left:85.5px;top:243px;font-size:15.8px;font-weight:bold;color:#0d4f72;transform:scaleX(0.975);transform-origin:0 0">Medizinischer Dienst</div>
<div class="t" style="left:85.5px;top:261px;font-size:15.6px;font-weight:bold;color:#1a9ccf;transform:scaleX(0.955);transform-origin:0 0">Niedersachsen</div>
<div class="a" style="left:288px;top:224px;width:76px;height:76px;border-radius:50%;background:#434b4e"></div>
<div class="t" style="left:285.0px;top:245.3px;font-size:31px;color:#6d8b55;letter-spacing:0.17px">Auftrag abgeschlossen</div>
<svg style="left:1228px;top:230px" width="71" height="71" viewBox="0 0 71 71">
<circle cx="35.4" cy="35.4" r="34.2" fill="#434b4e" stroke="#1f2224" stroke-width="1.3"/>
<rect x="18.8" y="30.7" width="23.6" height="24" fill="none" stroke="#1e1e1e" stroke-width="3"/>
<path d="M17.6,37.2 L28.8,47.2 L52.8,22.6" fill="none" stroke="#3a9ad9" stroke-width="8"/>
</svg>
<div class="a" style="left:1px;top:311px;width:19px;height:719px;background:#fff;border-top:1px solid #000;border-right:1px solid #000"></div>
<svg style="left:9px;top:314px" width="7" height="12" viewBox="0 0 7 12"><path d="M0,0 L6.5,6 L0,12Z" fill="#5e5e5e"/></svg>
<div class="a" style="left:20px;top:311px;width:246px;height:719px;background:#06668f"></div>
<div class="a" style="left:20px;top:326px;width:246px;height:228px;background:#3c3d42"></div>
<div class="a" style="left:20px;top:606px;width:246px;height:198px;background:#3c3d42"></div>
<div class="a" style="left:266px;top:311px;width:1px;height:719px;background:#fff"></div>
<div class="a" style="left:267px;top:311px;width:1638px;height:719px;background:#ebebeb"></div>
<div class="t" style="left:33.0px;top:336.3px;font-size:12.5px;color:#f4f4f4;transform:scaleX(0.935);transform-origin:0 0">WEITERE AKTIONEN</div>
<div class="a" style="left:32px;top:353px;width:213px;height:1px;background:repeating-linear-gradient(to right,#2a90c8 0 2px,transparent 2px 4px)"></div>
<div class="t" style="left:63.0px;top:371.0px;font-size:12.6px;color:#f2f2f2;">Auftrag abschließen</div>
<div class="t" style="left:63.0px;top:396.7px;font-size:12.6px;color:#f2f2f2;">E-Akte</div>
<div class="t" style="left:63.0px;top:422.6px;font-size:12.6px;color:#f2f2f2;">Mail an Begutachter/in</div>
<div class="t" style="left:63.0px;top:448.6px;font-size:12.6px;color:#f2f2f2;">Mail an Krankenkasse</div>
<div class="t" style="left:63.0px;top:474.6px;font-size:12.6px;color:#f2f2f2;">Freigabe zurücknehmen</div>
<div class="t" style="left:63.0px;top:501.4px;font-size:12.6px;color:#f2f2f2;">Ablage</div>
<div class="t" style="left:63.0px;top:530.3px;font-size:12.6px;color:#f2f2f2;">Indexierung</div>
<div class="t" style="left:33.0px;top:615.3px;font-size:12.5px;color:#f4f4f4;transform:scaleX(0.885);transform-origin:0 0">DRUCKEN</div>
<div class="a" style="left:32px;top:633px;width:213px;height:1px;background:repeating-linear-gradient(to right,#2a90c8 0 2px,transparent 2px 4px)"></div>
<div class="t" style="left:63.0px;top:650.8px;font-size:12.6px;color:#f2f2f2;">Erhebungsbogen</div>
<div class="t" style="left:63.0px;top:676.5px;font-size:12.6px;color:#f2f2f2;">Anschreiben</div>
<div class="t" style="left:63.0px;top:702.1px;font-size:12.6px;color:#f2f2f2;">Druck 3</div>
<div class="t" style="left:63.0px;top:727.7px;font-size:12.6px;color:#f2f2f2;">Druck 4</div>
<div class="t" style="left:63.0px;top:752.9px;font-size:12.6px;color:#f2f2f2;">Druck 5</div>
<div class="a" style="left:276px;top:319px;width:507px;height:285px;background:#fff"></div>
<div class="a" style="left:798px;top:319px;width:507px;height:285px;background:#fff"></div>
<div class="a" style="left:1331px;top:319px;width:568px;height:285px;background:#fff"></div>
<div class="t" style="left:285.0px;top:352.1px;font-size:12px;color:#6e6e6e;letter-spacing:0.5px">ID / Auftragsnummer</div>
<div class="a" style="left:435px;top:349px;width:76px;height:20px;border:1px solid #0c5f89;background:#fff"></div>
<div class="t" style="left:208.5px;width:300px;text-align:right;top:353.0px;font-size:12px;color:#111;letter-spacing:0.45px">12</div>
<div class="a" style="left:520px;top:349px;width:152px;height:20px;border:1px solid #0c5f89;background:#fff"></div>
<div class="t" style="left:522.0px;top:353.0px;font-size:12px;color:#111;letter-spacing:0.45px">A00002</div>
<div class="t" style="left:285.0px;top:380.8px;font-size:12px;color:#6e6e6e;letter-spacing:0.5px">Versicherte</div>
<div class="a" style="left:435px;top:377px;width:303px;height:20px;border:1px solid #0f9ad0;background:#fff"></div>
<div class="a" style="left:720px;top:378px;width:17px;height:18px;border:1px solid #dedede;background:#fff"></div>
<svg style="left:724.5px;top:385px" width="9" height="5" viewBox="0 0 9 5"><path d="M0.5,0.5 L4.5,4.5 L8.5,0.5" fill="none" stroke="#555" stroke-width="1"/></svg>
<div class="t" style="left:437.0px;top:381.0px;font-size:12px;color:#111;letter-spacing:0.45px">Kramer, Nicole (Frau)</div>
<div class="t" style="left:285.0px;top:409.2px;font-size:12px;color:#6e6e6e;letter-spacing:0.5px">Geburtsdatum</div>
<div class="t" style="left:437.5px;top:409.3px;font-size:12px;color:#111;letter-spacing:0.45px">12.08.1955</div>
<div class="t" style="left:285.0px;top:436.8px;font-size:12px;color:#6e6e6e;letter-spacing:0.5px">Adresse</div>
<div class="t" style="left:437.0px;top:438.0px;font-size:12px;color:#111;letter-spacing:0.45px">Kastanienweg 12, 31171 Nordstemmen</div>
<div class="t" style="left:285.0px;top:464.8px;font-size:12px;color:#6e6e6e;letter-spacing:0.5px">Kasse / KV Nummer</div>
<div class="t" style="left:437.0px;top:466.0px;font-size:12px;color:#111;letter-spacing:0.45px">AOK Aurich Gesundheitsmanagement ambulant /</div>
<div class="t" style="left:437.0px;top:481.6px;font-size:12px;color:#111;letter-spacing:0.45px">R115456654</div>
<div class="t" style="left:285.0px;top:521.8px;font-size:12px;color:#6e6e6e;letter-spacing:0.5px">Sachbearbeitung</div>
<div class="a" style="left:435px;top:519px;width:303px;height:20px;border:1px solid #0f9ad0;background:#fff"></div>
<div class="a" style="left:720px;top:520px;width:17px;height:18px;border:1px solid #dedede;background:#fff"></div>
<svg style="left:724.5px;top:527px" width="9" height="5" viewBox="0 0 9 5"><path d="M0.5,0.5 L4.5,4.5 L8.5,0.5" fill="none" stroke="#555" stroke-width="1"/></svg>
<div class="t" style="left:437.0px;top:523.0px;font-size:12px;color:#111;letter-spacing:0.45px">Ramftel</div>
<div class="t" style="left:814.0px;top:352.3px;font-size:12px;color:#6e6e6e;letter-spacing:0.4px">Notiz</div>
<div class="a" style="left:813px;top:372px;width:477px;height:220px;border:1px solid #2a84b5;background:#fff"></div>
<div class="t" style="left:1343.0px;top:352.3px;font-size:12px;color:#6e6e6e;letter-spacing:0.4px">Notiz Versicherte</div>
<div class="t" style="left:1344.0px;top:374.7px;font-size:13.9px;color:#0e5f86;font-weight:bold">Bitte an Herrn X verweisen !&gt;</div>
<div class="a" style="left:276px;top:630px;width:1629px;height:1px;background:#dedede"></div>
<div class="a" style="left:275px;top:631px;width:1px;height:399px;background:#f8f8f8"></div>
<div class="a" style="left:277px;top:607px;width:70px;height:25px;background:#f5f5f5;border:1px solid #e2e2e2;border-bottom:none"></div>
<div class="t" style="left:284.3px;top:613.3px;font-size:12.4px;color:#111;">Erfassung</div>
<div class="a" style="left:347px;top:609px;width:69px;height:22px;background:#ececec;border:1px solid #dcdcdc;border-bottom:none;border-left:none"></div>
<div class="t" style="left:231.5px;width:300px;text-align:center;top:614.5px;font-size:12.4px;color:#111;">Aktivitäten</div>
<div class="a" style="left:416px;top:609px;width:68px;height:22px;background:#ececec;border:1px solid #dcdcdc;border-bottom:none;border-left:none"></div>
<div class="t" style="left:300.0px;width:300px;text-align:center;top:614.5px;font-size:12.4px;color:#111;">Abschluss</div>
<div class="a" style="left:484px;top:609px;width:90px;height:22px;background:#ececec;border:1px solid #dcdcdc;border-bottom:none;border-left:none"></div>
<div class="t" style="left:379.0px;width:300px;text-align:center;top:614.5px;font-size:12.4px;color:#111;">Bemerkungen</div>
<div class="a" style="left:574px;top:609px;width:55px;height:22px;background:#ececec;border:1px solid #dcdcdc;border-bottom:none;border-left:none"></div>
<div class="t" style="left:451.5px;width:300px;text-align:center;top:614.5px;font-size:12.4px;color:#111;">Dateien</div>
<div class="a" style="left:629px;top:609px;width:100px;height:22px;background:#ececec;border:1px solid #dcdcdc;border-bottom:none;border-left:none"></div>
<div class="t" style="left:529.0px;width:300px;text-align:center;top:614.5px;font-size:12.4px;color:#111;">Wiedervorlagen</div>
<div class="t" style="left:293.0px;top:662.8px;font-size:12px;color:#6e6e6e;letter-spacing:0.5px">Krankenkasse</div>
<div class="a" style="left:443px;top:660px;width:304px;height:20px;border:1px solid #0c5f89;background:#fff"></div>
<div class="a" style="left:729px;top:661px;width:17px;height:18px;border:1px solid #dedede;background:#fff"></div>
<svg style="left:733.5px;top:668px" width="9" height="5" viewBox="0 0 9 5"><path d="M0.5,0.5 L4.5,4.5 L8.5,0.5" fill="none" stroke="#555" stroke-width="1"/></svg>
<div class="t" style="left:445.0px;top:664.0px;font-size:12px;color:#111;letter-spacing:0.45px">IKK Schwerin</div>
<div class="t" style="left:293.0px;top:690.8px;font-size:12px;color:#6e6e6e;letter-spacing:0.5px">Krankenkassenkontakt</div>
<div class="a" style="left:443px;top:688px;width:304px;height:20px;border:1px solid #0c5f89;background:#fff"></div>
<div class="a" style="left:729px;top:689px;width:17px;height:18px;border:1px solid #dedede;background:#fff"></div>
<svg style="left:733.5px;top:696px" width="9" height="5" viewBox="0 0 9 5"><path d="M0.5,0.5 L4.5,4.5 L8.5,0.5" fill="none" stroke="#555" stroke-width="1"/></svg>
<div class="t" style="left:293.0px;top:719.8px;font-size:12px;color:#6e6e6e;letter-spacing:0.5px">Eingangsdatum</div>
<div class="a" style="left:443px;top:717px;width:115px;height:20px;border:1px solid #0c5f89;background:#fff"></div>
<div class="t" style="left:255.5px;width:300px;text-align:right;top:721.0px;font-size:12px;color:#111;letter-spacing:0.45px">12.08.2023</div>
<div class="t" style="left:293.0px;top:747.8px;font-size:12px;color:#6e6e6e;letter-spacing:0.5px">Kategorie</div>
<div class="a" style="left:443px;top:745px;width:304px;height:20px;border:1px solid #0c5f89;background:#fff"></div>
<div class="a" style="left:729px;top:746px;width:17px;height:18px;border:1px solid #dedede;background:#fff"></div>
<svg style="left:733.5px;top:753px" width="9" height="5" viewBox="0 0 9 5"><path d="M0.5,0.5 L4.5,4.5 L8.5,0.5" fill="none" stroke="#555" stroke-width="1"/></svg>
<div class="t" style="left:445.0px;top:749.0px;font-size:12px;color:#111;letter-spacing:0.45px">Leistungsabgrenzung</div>
<div class="t" style="left:293.0px;top:775.8px;font-size:12px;color:#6e6e6e;letter-spacing:0.5px">Bereich</div>
<div class="a" style="left:443px;top:773px;width:304px;height:20px;border:1px solid #0c5f89;background:#fff"></div>
<div class="a" style="left:729px;top:774px;width:17px;height:18px;border:1px solid #dedede;background:#fff"></div>
<svg style="left:733.5px;top:781px" width="9" height="5" viewBox="0 0 9 5"><path d="M0.5,0.5 L4.5,4.5 L8.5,0.5" fill="none" stroke="#555" stroke-width="1"/></svg>
<div class="t" style="left:293.0px;top:804.8px;font-size:12px;color:#6e6e6e;letter-spacing:0.5px">Begutachtungsart</div>
<div class="a" style="left:443px;top:802px;width:304px;height:20px;border:1px solid #0c5f89;background:#fff"></div>
<div class="a" style="left:729px;top:803px;width:17px;height:18px;border:1px solid #dedede;background:#fff"></div>
<svg style="left:733.5px;top:810px" width="9" height="5" viewBox="0 0 9 5"><path d="M0.5,0.5 L4.5,4.5 L8.5,0.5" fill="none" stroke="#555" stroke-width="1"/></svg>
<div class="t" style="left:445.0px;top:806.0px;font-size:12px;color:#111;letter-spacing:0.45px">Folgeauftrag</div>
<div class="t" style="left:293.0px;top:832.8px;font-size:12px;color:#6e6e6e;letter-spacing:0.5px">Prioritäten</div>
<div class="a" style="left:443px;top:830px;width:304px;height:20px;border:1px solid #0c5f89;background:#fff"></div>
<div class="a" style="left:729px;top:831px;width:17px;height:18px;border:1px solid #dedede;background:#fff"></div>
<svg style="left:733.5px;top:838px" width="9" height="5" viewBox="0 0 9 5"><path d="M0.5,0.5 L4.5,4.5 L8.5,0.5" fill="none" stroke="#555" stroke-width="1"/></svg>
<div class="t" style="left:445.0px;top:834.0px;font-size:12px;color:#111;letter-spacing:0.45px">Normal</div>
<div class="a" style="left:829px;top:658px;width:12.5px;height:12.5px;background:#fff;border-top:2px solid #111;border-left:2px solid #111;border-right:1px solid #f6f6f6;border-bottom:1px solid #f6f6f6"></div>
<div class="t" style="left:846.0px;top:661.8px;font-size:12px;color:#6e6e6e;letter-spacing:0.5px">Vorberatung</div>
<div class="a" style="left:1905px;top:217px;width:14px;height:850px;background:#f3f3f3"></div>
<svg style="left:1907px;top:221px" width="10" height="8" viewBox="0 0 10 8"><path d="M1,7 L5,1 L9,7Z" fill="#6e6e6e" stroke="#6e6e6e" stroke-linejoin="round"/></svg>
<div class="a" style="left:1909px;top:234px;width:9px;height:777px;background:#6e6e6e;border-radius:4.5px"></div>
<svg style="left:1907px;top:1055px" width="10" height="8" viewBox="0 0 10 8"><path d="M1,1 L5,7 L9,1Z" fill="#6e6e6e" stroke="#6e6e6e" stroke-linejoin="round"/></svg>
<div class="a" style="left:1px;top:1030px;width:1904px;height:38px;background:#404040"></div>
<div class="a" style="left:0;top:1068px;width:1919px;height:17px;background:#f1f1f1"></div><div class="a" style="left:392px;top:1068px;width:1513px;height:17px;background:#f4f4f4"></div><div class="a" style="left:0;top:1085px;width:1919px;height:1px;background:#fdfdfd"></div>
<div class="a" style="left:0;top:1068px;width:1px;height:17px;background:#707070"></div>
<div class="t" style="left:6.5px;top:1072.5px;font-size:11.2px;color:#4d5a75;">Datensatz:</div>
<svg style="left:66px;top:1073px" width="9" height="10" viewBox="0 0 9 10"><rect x="0.8" y="1.5" width="1.5" height="7" fill="#333"/><path d="M8,1.5 L2.5,5 L8,8.5Z" fill="#333"/></svg>
<svg style="left:84px;top:1073px" width="6" height="10" viewBox="0 0 6 10"><path d="M5,1.5 L0.5,5 L5,8.5Z" fill="#c2c2c2"/></svg>
<div class="a" style="left:95px;top:1070px;width:54px;height:15px;background:#fff;border:1px solid #cfcfcf;border-bottom:none"></div>
<div class="t" style="left:97.5px;top:1072.9px;font-size:11.3px;color:#111;">1 von 21</div>
<svg style="left:158px;top:1073px" width="6" height="10" viewBox="0 0 6 10"><path d="M0.5,1.5 L5,5 L0.5,8.5Z" fill="#333"/></svg>
<svg style="left:173px;top:1073px" width="9" height="10" viewBox="0 0 9 10"><path d="M1,1.5 L5.8,5 L1,8.5Z" fill="#333"/><rect x="6.5" y="1.5" width="1.5" height="7" fill="#333"/></svg>
<svg style="left:187px;top:1073px" width="13" height="10" viewBox="0 0 13 10"><path d="M0.5,1.5 L4.5,5 L0.5,8.5Z" fill="#c6c6c6"/><circle cx="9" cy="5" r="1.6" fill="none" stroke="#f2d49a" stroke-width="0.9"/><path d="M9,1.5 L9,2.6 M9,7.4 L9,8.5 M5.5,5 L6.6,5 M11.4,5 L12.5,5" stroke="#f2d49a" stroke-width="0.8"/></svg>
<div class="a" style="left:206px;top:1069px;width:1px;height:16px;background:#d4d4d4"></div>
<svg style="left:214px;top:1070px" width="17" height="16" viewBox="0 0 17 16"><path d="M7,15 L7,8.5 L0.8,2.8 L0.8,0.6 L15.2,0.6 L15.2,2.8 L10.5,7" fill="none" stroke="#333" stroke-width="1.05"/><path d="M10,9.5 L15.5,15 M15.5,9.5 L10,15" stroke="#e03030" stroke-width="1.3"/></svg>
<div class="t" style="left:233.0px;top:1071.7px;font-size:12.2px;color:#4d5a75;">Ungefiltert</div>
<div class="a" style="left:297px;top:1069px;width:1px;height:17px;background:#d4d4d4"></div>
<div class="a" style="left:303px;top:1070px;width:70px;height:16px;background:#fff;border:1px solid #d0d0d0;border-bottom:none"></div>
<div class="t" style="left:305.0px;top:1072.9px;font-size:11.3px;color:#111;">Suchen</div>
<div class="a" style="left:373px;top:1068px;width:18px;height:17px;background:#e7e7e7"></div>
<div class="a" style="left:391px;top:1069px;width:1px;height:16px;background:#d4d4d4"></div>
<svg style="left:400px;top:1073px" width="7" height="10" viewBox="0 0 7 10"><path d="M6.5,0.5 L0.5,5 L6.5,9.5Z" fill="#6e6e6e"/></svg>
<div class="a" style="left:410px;top:1072px;width:1412px;height:9px;background:#6e6e6e;border-radius:4.5px"></div>
<svg style="left:1893px;top:1073px" width="7" height="10" viewBox="0 0 7 10"><path d="M0.5,0.5 L6.5,5 L0.5,9.5Z" fill="#6e6e6e"/></svg>
<div class="a" style="left:1905px;top:1068px;width:14px;height:17px;background:#cdcdcd"></div>
<div class="a" style="left:0;top:1086px;width:1919px;height:23px;background:#f3f3f3"></div>
<div class="t" style="left:11.0px;top:1093.3px;font-size:11.5px;color:#222;transform:scaleX(0.885);transform-origin:0 0">TBAUFTRAEGE - IDATNR</div>
<div class="t" style="left:1789.0px;top:1093.8px;font-size:11.5px;color:#222;">Num</div>
<div class="a" style="left:1833px;top:1087px;width:40px;height:22px;background:#dedede"></div>
<svg style="left:1844px;top:1091px" width="17" height="14" viewBox="0 0 17 14"><rect x="0.5" y="0.5" width="16" height="13" fill="none" stroke="#222"/><path d="M0.5,2.5 L16.5,2.5" stroke="#222"/><path d="M3,6 L5,6 M3,10.5 L5,10.5" stroke="#222" stroke-width="1"/><rect x="8.5" y="4.5" width="4.5" height="2.5" fill="none" stroke="#222"/><rect x="8.5" y="9" width="4.5" height="2.5" fill="none" stroke="#222"/></svg>
<svg style="left:1884px;top:1089px" width="17" height="17" viewBox="0 0 17 17"><path d="M0.5,0.5 L16.5,16.5 L0.5,16.5Z" fill="none" stroke="#222"/><path d="M10,1 L16.5,1 L16.5,16.5 M13,4 L16.5,4 M13,7 L16.5,7 M13,10 L16.5,10 M13,13 L16.5,13" fill="none" stroke="#222"/><path d="M4,8 L4,13.5 L9.5,13.5Z" fill="#222"/></svg>
<svg style="left:1023px;top:172px" width="15" height="22" viewBox="0 0 15 22"><path d="M1.5,1.7 L1.5,17.7 L5.4,14 L9.4,19.4 L10.7,18.7 L8,13.2 L12.8,13.2 Z" fill="#fff" stroke="#111" stroke-width="1.1" stroke-linejoin="miter"/></svg>
</body></html>
